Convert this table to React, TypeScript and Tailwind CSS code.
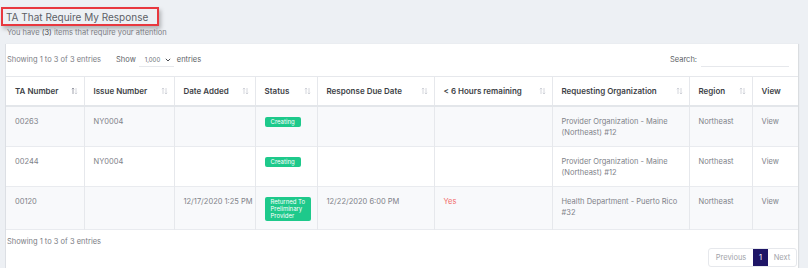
import { ReactNode } from "react";

type Row = {
  ta: string;
  issue: string;
  added: string;
  status: string[];
  due: string;
  hours: string;
  org: string[];
  region: string;
};

const rows: Row[] = [
  {
    ta: "00263",
    issue: "NY0004",
    added: "",
    status: ["Creating"],
    due: "",
    hours: "",
    org: ["Provider Organization - Maine", "(Northeast) #12"],
    region: "Northeast",
  },
  {
    ta: "00244",
    issue: "NY0004",
    added: "",
    status: ["Creating"],
    due: "",
    hours: "",
    org: ["Provider Organization - Maine", "(Northeast) #12"],
    region: "Northeast",
  },
  {
    ta: "00120",
    issue: "",
    added: "12/17/2020 1:25 PM",
    status: ["Returned To", "Preliminary", "Provider"],
    due: "12/22/2020 6:00 PM",
    hours: "Yes",
    org: ["Health Department - Puerto Rico", "#32"],
    region: "Northeast",
  },
];

const columns = [
  { label: "TA Number", w: "w-[78px]", sort: true, active: true },
  { label: "Issue Number", w: "w-[90px]", sort: true },
  { label: "Date Added", w: "w-[81px]", sort: true },
  { label: "Status", w: "w-[62px]", sort: true },
  { label: "Response Due Date", w: "w-[117px]", sort: true },
  { label: "< 6 Hours remaining", w: "w-[118px]", sort: true },
  { label: "Requesting Organization", w: "w-[137px]", sort: true },
  { label: "Region", w: "w-[63px]", sort: true },
  { label: "View", w: "w-[46px]", sort: false },
];

const SortIcon = ({ active }: { active?: boolean }) => (
  <svg width="7" height="8" viewBox="0 0 7 8" className="shrink-0">
    <path d="M2 7V1M0.8 2.2L2 1l1.2 1.2" fill="none" stroke={active ? "#8a8d99" : "#c9ccd3"} strokeWidth="0.8" />
    <path d="M5 1v6M3.8 5.8L5 7l1.2-1.2" fill="none" stroke="#c9ccd3" strokeWidth="0.8" />
  </svg>
);

const Cell = ({ children }: { children?: ReactNode }) => (
  <td className="border-r border-[#e6e8ec] last:border-r-0 pl-[9px] pr-[4px] pt-[9px] pb-[8px] align-top whitespace-nowrap text-[7.5px] leading-[11px] text-[#808289]">
    {children}
  </td>
);

export default function App() {
  return (
    <div
      className="w-[808px] h-[268px] overflow-hidden bg-[#edf0f4] pl-[5px] pr-[10px]"
      style={{ fontFamily: "Inter, 'Noto Sans', sans-serif" }}
    >
      <div className="pt-[7px]">
        <div className="flex items-center w-fit ml-[-4px] border-[2.5px] border-[#e8383f] pl-[3px] pr-[9px] h-[19px] shadow-[2px_3px_4px_rgba(0,0,0,0.25)]">
          <h1 className="text-[10px] leading-[14px] text-[#5d5f66]">TA That Require My Response</h1>
        </div>
        <p className="mt-[1px] ml-[2px] text-[7.5px] leading-[11px] text-[#7b7d84]">
          You have <span className="text-[#4a4c52]">(3)</span> items that require your attention
        </p>
      </div>

      <div className="mt-[6px] bg-white border-l border-[#dcdfe4] shadow-[1px_0_1px_rgba(0,0,0,0.08)] w-[793px]">
        <div className="flex items-center h-[32px] pl-[1px] text-[7.5px] text-[#7b7d84]">
          <span>Showing 1 to 3 of 3 entries</span>
          <span className="ml-[15px] text-[#5d5f66]">Show</span>
          <div className="ml-[3px] flex items-center w-[35px] h-[14px] border-b border-[#e6e8ec] pl-[6px] text-[6px] text-[#6b6d74]">
            <span>1,000</span>
            <svg width="6" height="4" viewBox="0 0 6 4" className="ml-[5px]">
              <path d="M0.8 0.8L3 3l2.2-2.2" fill="none" stroke="#4a4c52" strokeWidth="1" />
            </svg>
          </div>
          <span className="ml-[3px] text-[#5d5f66]">entries</span>
          <span className="ml-auto text-[#5d5f66]">Search:</span>
          <div className="ml-[4px] mr-[9px] w-[88px] h-[14px] border-b border-[#e6e8ec]" />
        </div>

        <table className="table-fixed border-collapse w-[792px]">
          <colgroup>
            {columns.map((c) => (
              <col key={c.label} className={c.w} />
            ))}
          </colgroup>
          <thead>
            <tr className="border-t border-[#e6e8ec] border-b-2 border-b-[#e3e6ea]">
              {columns.map((c) => (
                <th
                  key={c.label}
                  className="border-r border-[#e6e8ec] last:border-r-0 h-[29px] pl-[9px] pr-[6px] text-left font-semibold text-[8px] text-[#3d3f46]"
                >
                  <div className="flex items-center justify-between">
                    <span className="whitespace-nowrap">{c.label}</span>
                    {c.sort && <SortIcon active={c.active} />}
                  </div>
                </th>
              ))}
            </tr>
          </thead>
          <tbody>
            {rows.map((r, i) => (
              <tr key={r.ta} className={`border-b border-[#e9ebef] ${i % 2 === 0 ? "bg-[#f8f9fb]" : "bg-white"} ${i === 2 ? "h-[42px]" : "h-[40px]"}`}>
                <Cell>{r.ta}</Cell>
                <Cell>{r.issue}</Cell>
                <Cell>{r.added}</Cell>
                <Cell>
                  <span className="inline-block mt-[1px] rounded-[2px] bg-[#1ec98b] px-[6px] py-[1.5px] text-[6px] leading-[7px] text-white">
                    {r.status.map((s) => (
                      <span key={s} className="block">
                        {s}
                      </span>
                    ))}
                  </span>
                </Cell>
                <Cell>{r.due}</Cell>
                <Cell>
                  <span className="text-[#f26a6a]">{r.hours}</span>
                </Cell>
                <Cell>
                  {r.org.map((o) => (
                    <span key={o} className="block">
                      {o}
                    </span>
                  ))}
                </Cell>
                <Cell>{r.region}</Cell>
                <Cell>View</Cell>
              </tr>
            ))}
          </tbody>
        </table>

        <div className="pl-[1px] pt-[6px] text-[7.5px] leading-[11px] text-[#7b7d84]">Showing 1 to 3 of 3 entries</div>
        <div className="flex justify-end pt-[1px] pr-[1px] pb-[4px]">
          <div className="flex h-[19px] text-[7.5px] text-[#a3a5ab] border border-[#e6e8ec] rounded-[3px] overflow-hidden">
            <span className="flex items-center justify-center w-[44px]">Previous</span>
            <span className="flex items-center justify-center w-[15px] bg-[#1e1566] text-white">1</span>
            <span className="flex items-center justify-center w-[28px]">Next</span>
          </div>
        </div>
      </div>
    </div>
  );
}
